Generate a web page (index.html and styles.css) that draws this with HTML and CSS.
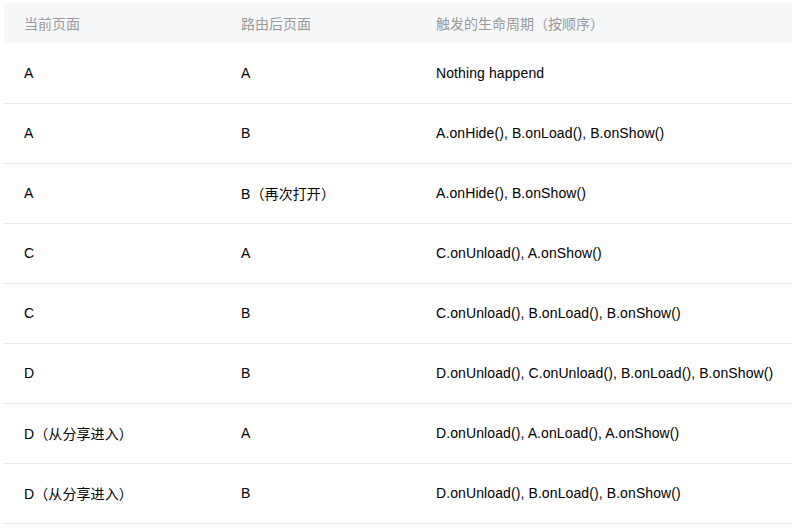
FILE: index.html
```html
<!DOCTYPE html>
<html lang="zh">
<head>
<meta charset="utf-8">
<link rel="stylesheet" href="styles.css">
</head>
<body>
<table class="lifecycle">
  <thead>
    <tr><th class="c1">当前页面</th><th class="c2">路由后页面</th><th class="c3">触发的生命周期（按顺序）</th></tr>
  </thead>
  <tbody>
    <tr><td>A</td><td>A</td><td>Nothing happend</td></tr>
    <tr><td>A</td><td>B</td><td>A.onHide(), B.onLoad(), B.onShow()</td></tr>
    <tr><td>A</td><td>B（再次打开）</td><td>A.onHide(), B.onShow()</td></tr>
    <tr><td>C</td><td>A</td><td>C.onUnload(), A.onShow()</td></tr>
    <tr><td>C</td><td>B</td><td>C.onUnload(), B.onLoad(), B.onShow()</td></tr>
    <tr><td>D</td><td>B</td><td>D.onUnload(), C.onUnload(), B.onLoad(), B.onShow()</td></tr>
    <tr><td>D（从分享进入）</td><td>A</td><td>D.onUnload(), A.onLoad(), A.onShow()</td></tr>
    <tr><td>D（从分享进入）</td><td>B</td><td>D.onUnload(), B.onLoad(), B.onShow()</td></tr>
  </tbody>
</table>
</body>
</html>
```
FILE: styles.css
```css
html, body {
  margin: 0;
  background: #fff;
}
body {
  padding: 3px 0 0 4px;
  font-family: "Liberation Sans", Arial, "Noto Sans CJK SC", sans-serif;
  font-size: 14px;
  color: #000;
  overflow: hidden;
}
.lifecycle {
  border-collapse: collapse;
  width: 800px;
  table-layout: fixed;
}
.lifecycle th {
  background: #f7f8fa;
  color: #999;
  font-weight: normal;
  text-align: left;
  height: 40px;
  padding: 0 20px;
  box-sizing: border-box;
  vertical-align: middle;
}
.lifecycle .c1 { width: 217px; }
.lifecycle .c2 { width: 195px; }
.lifecycle td {
  height: 60px;
  padding: 0 20px;
  box-sizing: border-box;
  border-bottom: 1px solid #e8e8e8;
  vertical-align: middle;
  white-space: nowrap;
  letter-spacing: 0.1px;
}
```
